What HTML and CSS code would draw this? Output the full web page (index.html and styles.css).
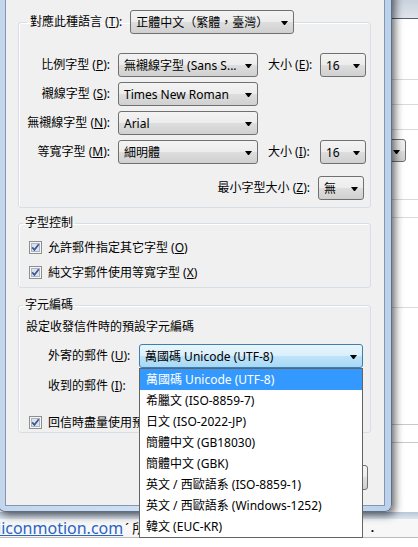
FILE: index.html
```html
<!DOCTYPE html>
<html lang="zh-Hant">
<head>
    <meta charset="UTF-8">
    <meta name="viewport" content="width=device-width, initial-scale=1.0">
    <title>字型與編碼</title>
    <link rel="stylesheet" href="styles.css">
</head>
<body>
    <!-- window behind the dialog -->
    <div class="desktop">
        <div class="bg-titlebar"></div>
        <div class="bg-row row-a"></div>
        <div class="bg-row row-b"></div>
        <div class="bg-row row-c"></div>
        <div class="bg-row row-d"><span class="bg-select"><span class="arrow"></span></span></div>
        <div class="bg-row row-e"></div>
        <div class="bg-row row-f"></div>
        <div class="bg-row row-g"></div>
        <div class="bg-row row-h"></div>
        <div class="bg-band"></div>
        <div class="bg-link-row">
            <a class="bg-link">iiconmotion.com</a><span class="bg-tail">ˊ 所</span>
            <span class="bg-dot">.</span>
        </div>
        <div class="bg-foot">‥</div>
    </div>

    <!-- fonts dialog -->
    <div class="dialog">
        <div class="client">
            <fieldset class="group group-fonts">
                <legend class="legend-lang">
                    <span class="label">對應此種語言 (<u>T</u>):</span>
                    <span class="select select-lang">正體中文（繁體，臺灣）<span class="arrow"></span></span>
                </legend>
                <div class="font-grid">
                    <span class="label right">比例字型 (<u>P</u>):</span>
                    <span class="select">無襯線字型 (Sans S...<span class="arrow"></span></span>
                    <span class="label size">大小 (<u>E</u>):</span>
                    <span class="select">16<span class="arrow"></span></span>

                    <span class="label right">襯線字型 (<u>S</u>):</span>
                    <span class="select">Times New Roman<span class="arrow"></span></span>
                    <span></span><span></span>

                    <span class="label right">無襯線字型 (<u>N</u>):</span>
                    <span class="select">Arial<span class="arrow"></span></span>
                    <span></span><span></span>

                    <span class="label right">等寬字型 (<u>M</u>):</span>
                    <span class="select">細明體<span class="arrow"></span></span>
                    <span class="label size">大小 (<u>I</u>):</span>
                    <span class="select">16<span class="arrow"></span></span>

                    <div class="min-size">
                        <span class="label">最小字型大小 (<u>Z</u>):</span>
                        <span class="select select-small">無<span class="arrow"></span></span>
                    </div>
                </div>
            </fieldset>

            <fieldset class="group group-control">
                <legend class="caption">字型控制</legend>
                <div class="check-row">
                    <svg class="cb" width="13" height="13" viewBox="0 0 13 13"><rect x="0.5" y="0.5" width="12" height="12" fill="#f6f6f6" stroke="#8e8f8f"/><rect x="2.5" y="2.5" width="8" height="8" fill="#dde2ea" stroke="#aeb5c2"/><path d="M3.2 6.4 L5.4 8.9 L9.8 3.3" fill="none" stroke="#3f5799" stroke-width="1.7"/></svg>
                    <span>允許郵件指定其它字型 (<u>O</u>)</span>
                </div>
                <div class="check-row">
                    <svg class="cb" width="13" height="13" viewBox="0 0 13 13"><rect x="0.5" y="0.5" width="12" height="12" fill="#f6f6f6" stroke="#8e8f8f"/><rect x="2.5" y="2.5" width="8" height="8" fill="#dde2ea" stroke="#aeb5c2"/><path d="M3.2 6.4 L5.4 8.9 L9.8 3.3" fill="none" stroke="#3f5799" stroke-width="1.7"/></svg>
                    <span>純文字郵件使用等寬字型 (<u>X</u>)</span>
                </div>
            </fieldset>

            <fieldset class="group group-charset">
                <legend class="caption">字元編碼</legend>
                <div class="charset-note">設定收發信件時的預設字元編碼</div>
                <div class="charset-row first">
                    <span class="label charset-label">外寄的郵件 (<u>U</u>):</span>
                    <div class="combo">
                        <span class="select select-wide hot">萬國碼 Unicode (UTF-8)<span class="arrow"></span></span>
                        <ul class="dropdown-list">
                            <li class="selected">萬國碼 Unicode (UTF-8)</li>
                            <li>希臘文 (ISO-8859-7)</li>
                            <li>日文 (ISO-2022-JP)</li>
                            <li>簡體中文 (GB18030)</li>
                            <li>簡體中文 (GBK)</li>
                            <li>英文 / 西歐語系 (ISO-8859-1)</li>
                            <li>英文 / 西歐語系 (Windows-1252)</li>
                            <li>韓文 (EUC-KR)</li>
                        </ul>
                    </div>
                </div>
                <div class="charset-row">
                    <span class="label charset-label">收到的郵件 (<u>I</u>):</span>
                    <span class="select select-wide"><span class="arrow"></span></span>
                </div>
                <div class="check-row reply">
                    <svg class="cb" width="13" height="13" viewBox="0 0 13 13"><rect x="0.5" y="0.5" width="12" height="12" fill="#f6f6f6" stroke="#8e8f8f"/><rect x="2.5" y="2.5" width="8" height="8" fill="#dde2ea" stroke="#aeb5c2"/><path d="M3.2 6.4 L5.4 8.9 L9.8 3.3" fill="none" stroke="#3f5799" stroke-width="1.7"/></svg>
                    <span>回信時盡量使用預設</span>
                </div>
            </fieldset>

            <div class="buttons">
                <button class="btn"></button>
            </div>
        </div>
    </div>
</body>
</html>
```

FILE: styles.css
```css
html, body {
    margin: 0;
    padding: 0;
}

body {
    width: 418px;
    height: 547px;
    overflow: hidden;
    position: relative;
    background-color: #ffffff;
    font-family: "Segoe UI", "Noto Sans", "Noto Sans CJK TC", sans-serif;
    font-size: 12px;
    color: #000000;
}

/* background window */
.desktop {
    height: 547px;
}

.bg-titlebar {
    height: 18px;
    background: linear-gradient(to bottom, #c9d2dd, #dfe5ec);
    border-bottom: 1px solid #56606e;
}

.bg-row {
    border-bottom: 1px solid #dadada;
}

.row-a { height: 60px; }
.row-b { height: 24px; }
.row-c { height: 24px; }
.row-d { height: 60px; padding-top: 9px; }
.row-e { height: 17px; }
.row-f { height: 89px; }
.row-g { height: 116px; border-bottom-color: #c8c8c8; }
.row-h { height: 17px; border-bottom-color: #c8c8c8; }

.bg-select {
    display: block;
    position: relative;
    margin-left: 340px;
    width: 66px;
    height: 23px;
    box-sizing: border-box;
    border: 1px solid #707070;
    border-radius: 3px;
    background: linear-gradient(#f2f2f2, #ebebeb 50%, #dddddd 50%, #cfcfcf);
}

.bg-band {
    margin-top: 69px;
    height: 7px;
    background: linear-gradient(to bottom, #b9c6d6, #dde7f3);
}

.bg-link-row {
    height: 18px;
    border-bottom: 1px solid #b9b9b9;
    background-color: #f7f7f7;
    display: flex;
    align-items: flex-end;
    white-space: nowrap;
    overflow: hidden;
    line-height: 18px;
}

.bg-link {
    font-size: 16px;
    color: #2a64c4;
    text-decoration: underline;
    margin-left: -3px;
}

.bg-tail {
    font-size: 13px;
    margin-left: 2px;
}

.bg-dot {
    margin: 0 44px 0 auto;
    font-weight: bold;
}

.bg-foot {
    padding-left: 212px;
    color: #8a8a8a;
    line-height: 12px;
    margin-top: 2px;
}

/* dialog window */
.dialog {
    position: absolute;
    left: -2px;
    top: -10px;
    width: 394px;
    height: 522px;
    box-sizing: border-box;
    padding: 0 6px 5px 6px;
    border: 1px solid #5d6f86;
    border-top: none;
    border-radius: 0 0 7px 7px;
    background: linear-gradient(to right, #c3d6ec, #cfe0f3 40%, #bcd2ec);
    box-shadow: 3px 3px 9px rgba(0, 0, 0, 0.6);
    z-index: 1;
}

.client {
    height: 100%;
    box-sizing: border-box;
    border: 1px solid #8397b1;
    border-top: none;
    background-color: #f0f0f0;
    padding: 20px 13px 0 12px;
}

.group {
    margin: 0;
    padding: 0 7px;
    border: 1px solid #d5dfe5;
    border-radius: 3px;
    box-shadow: inset 1px 1px 0 #ffffff;
    min-width: 0;
}

.label {
    white-space: nowrap;
    line-height: 16px;
}

/* combobox */
.select {
    display: flex;
    align-items: center;
    position: relative;
    height: 24px;
    box-sizing: border-box;
    padding: 0 18px 0 5px;
    border: 1px solid #707070;
    border-radius: 3px;
    background: linear-gradient(#f3f3f3, #ececec 50%, #dedede 50%, #d0d0d0);
    white-space: nowrap;
    overflow: hidden;
}

.arrow {
    position: absolute;
    right: 5px;
    top: 10px;
    width: 1px;
    height: 0;
    border-left: 3px solid transparent;
    border-right: 3px solid transparent;
    border-top: 4px solid #000000;
}

.select.hot {
    border-color: #3c7fb1;
    background: linear-gradient(#e9f5fc, #d9effc 50%, #bde4fb 50%, #a9d8f3);
}

/* group 1: fonts */
.legend-lang {
    display: flex;
    align-items: center;
    gap: 8px;
    padding: 0 0 0 3px;
    margin-left: 1px;
}

.select-lang {
    width: 164px;
    height: 24px;
}

.font-grid {
    display: grid;
    grid-template-columns: 92px 140px 62px 46px;
    grid-template-rows: repeat(4, 24px) auto;
    row-gap: 5px;
    align-items: center;
    padding: 19px 0 7px 0;
}

.label.right {
    text-align: right;
    padding-right: 8px;
}

.label.size {
    padding-left: 10px;
}

.min-size {
    grid-column: 1 / -1;
    display: flex;
    justify-content: flex-end;
    align-items: center;
    gap: 8px;
    margin: 7px 2px 0 0;
}

.select-small {
    width: 46px;
}

/* group 2 & 3 */
.caption {
    padding: 0 2px;
    margin-left: -3px;
    line-height: 16px;
}

.group-control {
    margin-top: 7px;
    padding-top: 6px;
    padding-bottom: 5px;
}

.check-row {
    display: flex;
    align-items: center;
    gap: 5px;
    height: 20px;
    padding-left: 3px;
}

.check-row + .check-row {
    margin-top: 5px;
}

.cb {
    flex: none;
    margin-right: 1px;
}

.group-charset {
    margin-top: 9px;
    padding-top: 5px;
}

.charset-note {
    line-height: 18px;
}

.charset-row {
    display: flex;
    align-items: center;
    margin-top: 6px;
}

.charset-row.first {
    margin-top: 8px;
}

.charset-label {
    width: 114px;
    box-sizing: border-box;
    padding-left: 22px;
}

.combo {
    position: relative;
}

.select-wide {
    width: 224px;
}

.dropdown-list {
    position: absolute;
    top: 100%;
    left: 0;
    width: 224px;
    box-sizing: border-box;
    margin: 0;
    padding: 0;
    list-style: none;
    background-color: #ffffff;
    border: 1px solid #646464;
    z-index: 3;
}

.dropdown-list li {
    height: 21px;
    line-height: 21px;
    padding-left: 6px;
    white-space: nowrap;
}

.dropdown-list li.selected {
    background-color: #3399ff;
    color: #ffffff;
}

.check-row.reply {
    margin-top: 14px;
}

/* dialog buttons */
.buttons {
    display: flex;
    justify-content: flex-end;
    margin: 32px 3px 0 0;
}

.btn {
    width: 75px;
    height: 25px;
    border: 1px solid #707070;
    border-radius: 3px;
    background: linear-gradient(#f3f3f3, #ececec 50%, #dedede 50%, #d0d0d0);
}
```
